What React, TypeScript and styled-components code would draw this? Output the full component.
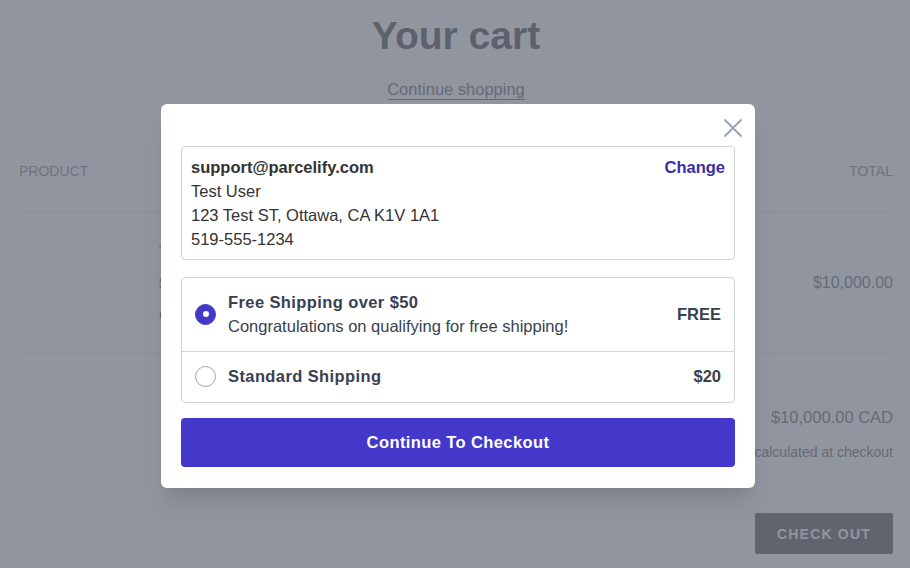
import React from "react";
import styled, { createGlobalStyle } from "styled-components";

const Global = createGlobalStyle`
  html, body { margin: 0; padding: 0; background: #fff; }
  body { font-family: "Liberation Sans", Arial, sans-serif; width: 910px; height: 568px; overflow: hidden; }
  * { box-sizing: border-box; }
`;

const Page = styled.div`
  position: relative;
  width: 910px;
  height: 568px;
  padding: 0 17px 0 19px;
  color: #333;
`;

const Header = styled.header`
  text-align: center;
  padding-top: 12px;
`;

const Title = styled.h1`
  margin: 0;
  font-size: 39px;
  line-height: 48px;
  font-weight: 700;
  color: #333;
`;

const ContinueLink = styled.a`
  display: inline-block;
  margin-top: 19px;
  font-size: 16.5px;
  line-height: 20px;
  color: rgba(51, 51, 51, 0.85);
  text-decoration: underline;
  text-underline-offset: 4px;
`;

const TableHead = styled.div`
  display: flex;
  justify-content: space-between;
  margin-top: 62px;
  padding-bottom: 31px;
  border-bottom: 1px solid #e3e3e3;
  font-size: 14px;
  line-height: 20px;
  color: #777;
  text-transform: uppercase;
`;

const ItemRow = styled.div`
  display: flex;
  align-items: center;
  height: 141px;
  border-bottom: 1px solid #e3e3e3;
`;

const ItemMedia = styled.div`
  width: 140px;
  align-self: stretch;
`;

const ItemInfo = styled.div`
  flex: 1;
  display: flex;
  flex-direction: column;
  gap: 12px;
  font-size: 15px;
  line-height: 20px;
  color: #333;
`;

const ItemPrice = styled.div`
  font-size: 16px;
  line-height: 20px;
  color: #555;
`;

const Footer = styled.div`
  display: flex;
  flex-direction: column;
  align-items: flex-end;
`;

const TotalLine = styled.div`
  margin-top: 53px;
  display: flex;
  gap: 16px;
  font-size: 16.5px;
  line-height: 20px;
  color: #555;
`;

const TaxNote = styled.div`
  margin-top: 15px;
  font-size: 14px;
  line-height: 20px;
  color: #555;
`;

const CheckoutBtn = styled.button`
  margin-top: 51px;
  width: 138px;
  height: 41px;
  border: 0;
  border-radius: 2px;
  background: #3c3c3c;
  color: #fff;
  font-family: inherit;
  font-weight: 700;
  font-size: 14px;
  letter-spacing: 1.2px;
`;

const Overlay = styled.div`
  position: absolute;
  inset: 0;
  background: rgba(107, 114, 128, 0.75);
  display: flex;
  justify-content: center;
  align-items: flex-start;
  padding: 104px 0 0 6px;
`;

const Modal = styled.div`
  width: 594px;
  background: #fff;
  border-radius: 6px;
  padding: 12px 20px 21px;
  box-shadow: 0 20px 25px -5px rgba(0, 0, 0, 0.1), 0 10px 10px -5px rgba(0, 0, 0, 0.04);
`;

const ModalHead = styled.div`
  display: flex;
  justify-content: flex-end;
  height: 30px;
  margin-right: -10px;
`;

const CloseBtn = styled.button`
  width: 24px;
  height: 24px;
  padding: 0;
  border: 0;
  background: none;
  color: #9ca3af;
  display: flex;
  align-items: center;
  justify-content: center;
`;

const AddressBox = styled.div`
  display: flex;
  justify-content: space-between;
  align-items: flex-start;
  border: 1px solid #d1d5db;
  border-radius: 4px;
  padding: 8px 9px 8px 9px;
  font-size: 16.5px;
  line-height: 24px;
  color: #333;
`;

const AddressLines = styled.div`
  display: flex;
  flex-direction: column;
`;

const Email = styled.div`
  font-weight: 700;
`;

const ChangeLink = styled.a`
  font-weight: 700;
  color: #3730a3;
`;

const RatesBox = styled.div`
  margin-top: 17px;
  border: 1px solid #d1d5db;
  border-radius: 4px;
`;

const RateRow = styled.label<{ $divider?: boolean }>`
  display: flex;
  align-items: center;
  gap: 12px;
  padding: ${(p) => (p.$divider ? "12px 13px 14px" : "12px 13px 13px")};
  border-top: ${(p) => (p.$divider ? "1px solid #d1d5db" : "0")};
  color: #374151;
  font-size: 16.5px;
  line-height: 24px;
`;

const Radio = styled.span<{ $checked?: boolean }>`
  flex: none;
  width: 21px;
  height: 21px;
  border-radius: 50%;
  border: 1px solid ${(p) => (p.$checked ? "#4338ca" : "#9ca3af")};
  background: ${(p) => (p.$checked ? "#4338ca" : "#fff")};
  display: flex;
  align-items: center;
  justify-content: center;
  &::after {
    content: "";
    width: 6px;
    height: 6px;
    border-radius: 50%;
    background: #fff;
    display: ${(p) => (p.$checked ? "block" : "none")};
  }
`;

const RateText = styled.div`
  flex: 1;
  display: flex;
  flex-direction: column;
`;

const RateName = styled.div`
  font-weight: 700;
  letter-spacing: 0.4px;
`;

const RateDesc = styled.div`
  font-weight: 400;
`;

const RatePrice = styled.div`
  font-weight: 700;
`;

const PrimaryBtn = styled.button`
  margin-top: 15px;
  width: 100%;
  height: 49px;
  border: 0;
  border-radius: 4px;
  background: #4338ca;
  color: #fff;
  font-family: inherit;
  font-size: 16.5px;
  font-weight: 700;
  letter-spacing: 0.4px;
`;

const rates = [
  { name: "Free Shipping over $50", desc: "Congratulations on qualifying for free shipping!", price: "FREE", checked: true },
  { name: "Standard Shipping", desc: "", price: "$20", checked: false },
];

export default function App() {
  return (
    <>
      <Global />
      <Page>
        <Header>
          <Title>Your cart</Title>
          <ContinueLink>Continue shopping</ContinueLink>
        </Header>
        <TableHead>
          <span>Product</span>
          <span>Total</span>
        </TableHead>
        <ItemRow>
          <ItemMedia />
          <ItemInfo>
            <span>Test Product</span>
            <span>$10,000.00</span>
            <span>Quantity: 1</span>
          </ItemInfo>
          <ItemPrice>$10,000.00</ItemPrice>
        </ItemRow>
        <Footer>
          <TotalLine>
            <span>Estimated total</span>
            <span>$10,000.00 CAD</span>
          </TotalLine>
          <TaxNote>Taxes and shipping calculated at checkout</TaxNote>
          <CheckoutBtn>CHECK OUT</CheckoutBtn>
        </Footer>
        <Overlay>
          <Modal>
            <ModalHead>
              <CloseBtn aria-label="Close">
                <svg width="20" height="20" viewBox="0 0 20 20" fill="none" stroke="currentColor" strokeWidth="2">
                  <path d="M1.5 1.5 L18.5 18.5 M18.5 1.5 L1.5 18.5" />
                </svg>
              </CloseBtn>
            </ModalHead>
            <AddressBox>
              <AddressLines>
                <Email>support@parcelify.com</Email>
                <span>Test User</span>
                <span>123 Test ST, Ottawa, CA K1V 1A1</span>
                <span>519-555-1234</span>
              </AddressLines>
              <ChangeLink>Change</ChangeLink>
            </AddressBox>
            <RatesBox>
              {rates.map((r, i) => (
                <RateRow key={r.name} $divider={i > 0}>
                  <Radio $checked={r.checked} />
                  <RateText>
                    <RateName>{r.name}</RateName>
                    {r.desc && <RateDesc>{r.desc}</RateDesc>}
                  </RateText>
                  <RatePrice>{r.price}</RatePrice>
                </RateRow>
              ))}
            </RatesBox>
            <PrimaryBtn>Continue To Checkout</PrimaryBtn>
          </Modal>
        </Overlay>
      </Page>
    </>
  );
}
